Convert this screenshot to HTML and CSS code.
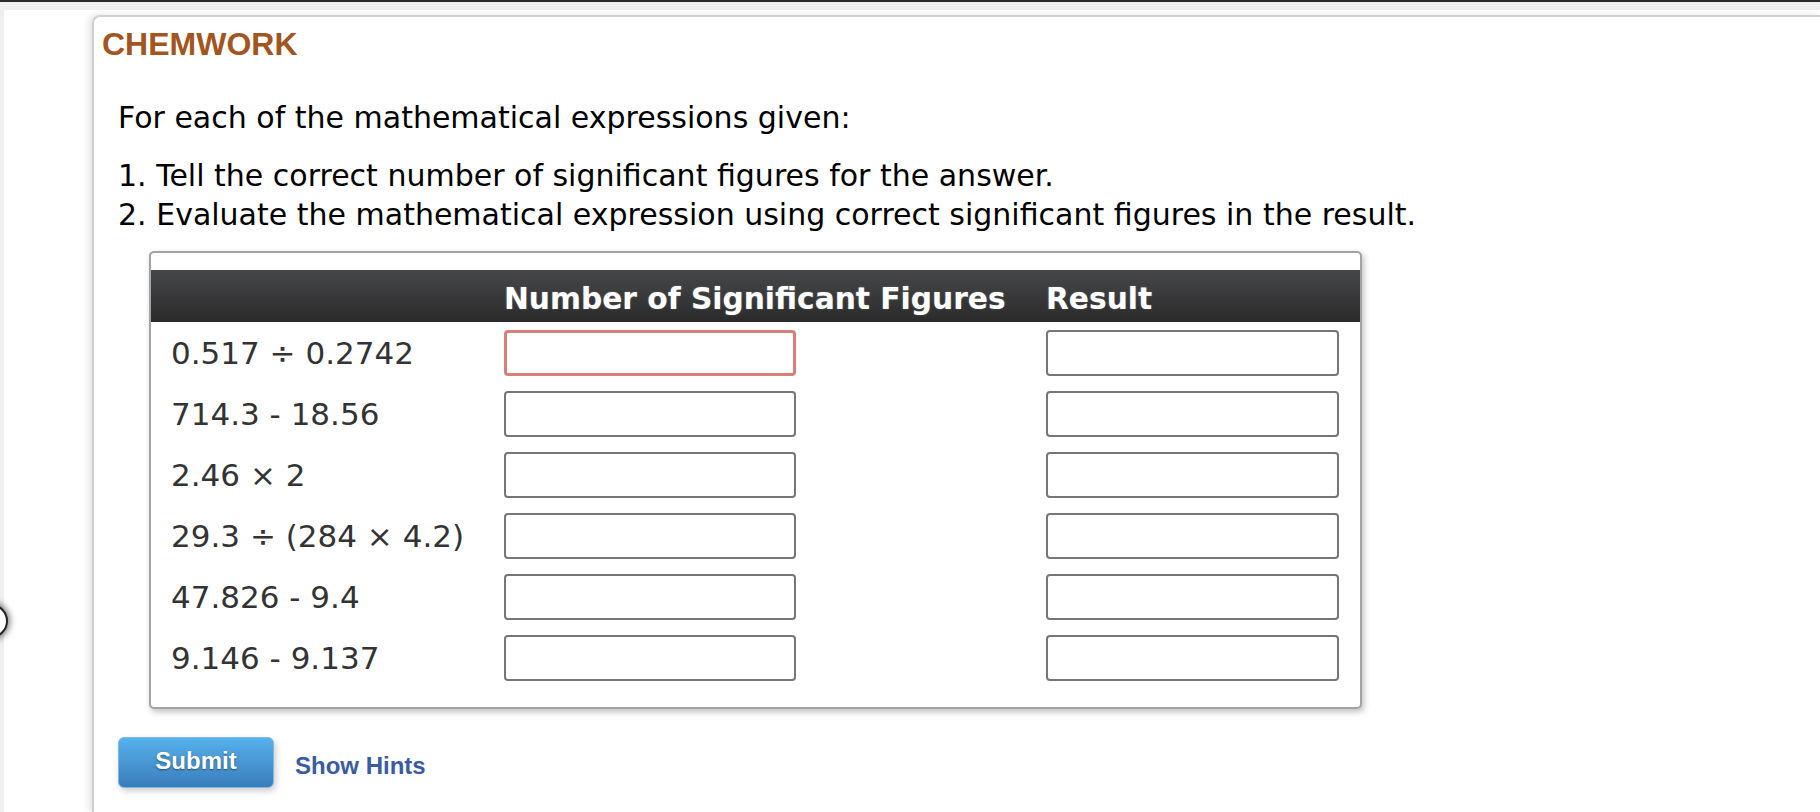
FILE: index.html
```html
<!DOCTYPE html>
<html>
<head>
<meta charset="utf-8">
<title>Chemwork</title>
<link rel="stylesheet" href="styles.css">
</head>
<body>
<div class="topbar"></div>
<div class="page">
  <div class="edge-knob"></div>
  <div class="card">
    <h1 class="brand">CHEMWORK</h1>
    <p class="intro">For each of the mathematical expressions given:</p>
    <ol class="steps">
      <li>Tell the correct number of significant figures for the answer.</li>
      <li>Evaluate the mathematical expression using correct significant figures in the result.</li>
    </ol>
    <div class="qbox">
      <div class="qhead">
        <div class="hcell"></div>
        <div class="hcell">Number of Significant Figures</div>
        <div class="hcell">Result</div>
      </div>
      <div class="qrow">
        <div class="expr">0.517 ÷ 0.2742</div>
        <div class="cell"><input class="field field-alert" type="text"></div>
        <div class="cell"><input class="field" type="text"></div>
      </div>
      <div class="qrow">
        <div class="expr">714.3 - 18.56</div>
        <div class="cell"><input class="field" type="text"></div>
        <div class="cell"><input class="field" type="text"></div>
      </div>
      <div class="qrow">
        <div class="expr">2.46 × 2</div>
        <div class="cell"><input class="field" type="text"></div>
        <div class="cell"><input class="field" type="text"></div>
      </div>
      <div class="qrow">
        <div class="expr">29.3 ÷ (284 × 4.2)</div>
        <div class="cell"><input class="field" type="text"></div>
        <div class="cell"><input class="field" type="text"></div>
      </div>
      <div class="qrow">
        <div class="expr">47.826 - 9.4</div>
        <div class="cell"><input class="field" type="text"></div>
        <div class="cell"><input class="field" type="text"></div>
      </div>
      <div class="qrow">
        <div class="expr">9.146 - 9.137</div>
        <div class="cell"><input class="field" type="text"></div>
        <div class="cell"><input class="field" type="text"></div>
      </div>
    </div>
    <div class="actions">
      <button class="submit" type="button">Submit</button>
      <a class="hints" href="#">Show Hints</a>
    </div>
  </div>
</div>
</body>
</html>
```
FILE: styles.css
```css
html, body {
  margin: 0;
  padding: 0;
  height: 100%;
  overflow: hidden;
}
body {
  background: #efefef;
  font-family: "DejaVu Sans", Verdana, sans-serif;
}
.topbar {
  height: 2px;
  background: #2b2b2b;
}
.page {
  position: relative;
  margin: 8px 0 0 4px;
  background: #fff;
  height: 802px;
  padding: 5px 0 0 88px;
  box-sizing: border-box;
}
.edge-knob {
  position: absolute;
  left: -30px;
  top: 594px;
  width: 30px;
  height: 30px;
  border-radius: 50%;
  background: #fff;
  border: 2px solid #222;
  box-shadow: 0 0 6px 2px rgba(0,0,0,0.5);
}
.card {
  height: 100%;
  border-top: 2px solid #cfcfcf;
  border-left: 2px solid #cfcfcf;
  border-top-left-radius: 8px;
  box-shadow: -3px 0 7px rgba(0,0,0,0.12);
  padding: 9px 0 0 24px;
  box-sizing: border-box;
}
.brand {
  margin: 0 0 0 -16px;
  font-family: "Liberation Sans", Arial, sans-serif;
  font-weight: bold;
  font-size: 32px;
  line-height: 37px;
  color: #a2551f;
}
.intro {
  margin: 35px 0 0 0;
  font-size: 30px;
  line-height: 39px;
  color: #000;
}
.steps {
  margin: 19px 0 0 0;
  padding: 0;
  list-style: decimal inside;
  font-size: 30px;
  line-height: 39px;
  color: #000;
}
.qbox {
  margin: 17px 0 0 31px;
  width: 1213px;
  box-sizing: border-box;
  border: 2px solid #a3a3a3;
  border-radius: 5px;
  padding: 17px 0 19px 0;
  box-shadow: 2px 3px 6px rgba(0,0,0,0.25);
  background: #fff;
}
.qhead, .qrow {
  display: grid;
  grid-template-columns: 353px 542px 1fr;
}
.qhead {
  height: 52px;
  align-items: center;
  background: linear-gradient(#47484a, #2a2a2b);
  color: #fff;
  font-weight: bold;
  font-size: 29.7px;
  text-shadow: 0 0 2px rgba(255,255,255,0.25);
}
.hcell {
  padding-top: 4px;
  white-space: nowrap;
}
.qrow {
  height: 61px;
  align-items: center;
}
.expr {
  padding-left: 20px;
  font-size: 31px;
  color: #333;
  white-space: nowrap;
}
.field {
  display: block;
  width: 292px;
  height: 46px;
  box-sizing: border-box;
  border: 2px solid #767676;
  border-radius: 4px;
  background: #fff;
  margin: 0;
  padding: 0 8px;
  font-size: 24px;
  outline: none;
}
.cell:last-child .field {
  width: 293px;
}
.field-alert {
  border: 3px solid #d87f7a;
}
.actions {
  display: flex;
  align-items: center;
  margin: 28px 0 0 0;
  gap: 21px;
}
.submit {
  width: 156px;
  height: 51px;
  border: 1px solid #7cbbe8;
  border-radius: 6px;
  background: linear-gradient(#56b1eb, #3a7cbb);
  color: #fff;
  font-family: "Liberation Sans", Arial, sans-serif;
  font-weight: bold;
  font-size: 24px;
  text-shadow: 0 1px 2px rgba(0,0,0,0.45);
  box-shadow: 2px 3px 6px rgba(0,0,0,0.2);
  padding: 0 0 4px 0;
  cursor: pointer;
}
.hints {
  font-family: "Liberation Sans", Arial, sans-serif;
  font-weight: bold;
  font-size: 24px;
  color: #3a5ba2;
  text-decoration: none;
  padding-top: 6px;
}
```
